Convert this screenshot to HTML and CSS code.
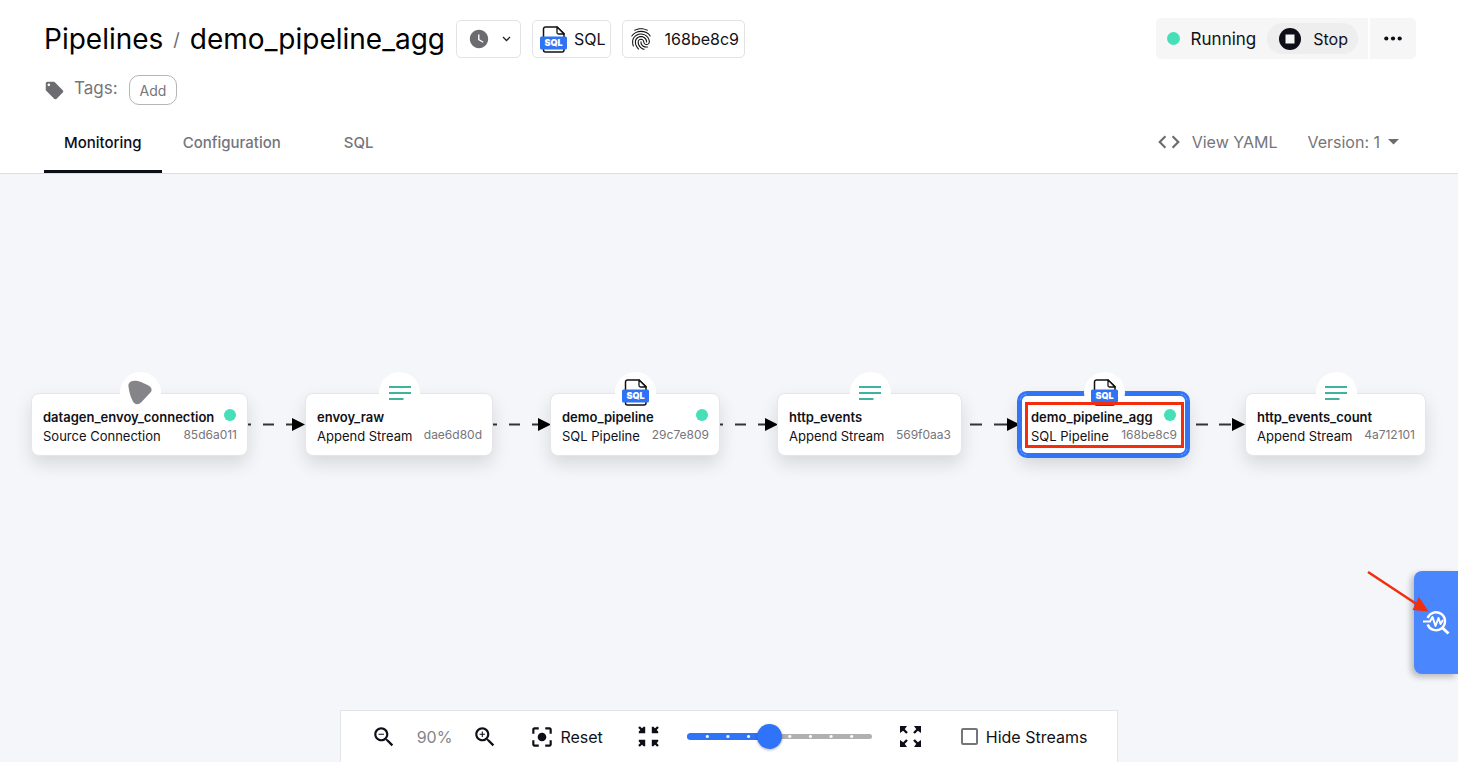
FILE: index.html
```html
<!DOCTYPE html>
<html lang="en">
<head>
    <meta charset="utf-8">
    <title>demo_pipeline_agg - Pipelines</title>
    <meta name="viewport" content="width=device-width, initial-scale=1">
    <link rel="stylesheet" href="styles.css">
</head>
<body>
    <!-- shared icons -->
    <svg class="sprite" aria-hidden="true">
        <symbol id="icon-sql" viewBox="0 0 27 27">
            <path d="M5.5 1H17l7 6.5V24a2 2 0 0 1-2 2H5.5a2 2 0 0 1-2-2V3a2 2 0 0 1 2-2z" fill="#fff" stroke="#111" stroke-width="1.5"/>
            <path d="M17 1v5.500a1.500 1.500 0 0 0 1.500 1.500H24z" fill="#fff" stroke="#111" stroke-width="1.3" stroke-linejoin="round"/>
            <rect x="0" y="10.500" width="27" height="13" rx="1.5" fill="#2f73f5"/>
            <text x="13.500" y="20.300" text-anchor="middle" class="sql-label">SQL</text>
        </symbol>
        <symbol id="icon-stream" viewBox="0 0 22 14">
            <path d="M0 1h22M0 7h22M0 13h14.500" stroke="#3fb39b" stroke-width="2"/>
        </symbol>
    </svg>

    <header class="header">
        <div class="title-row">
            <h1 class="title">
                <a href="#">Pipelines</a>
                <span class="slash">/</span>
                <span>demo_pipeline_agg</span>
            </h1>
            <button class="chip chip-schedule" aria-label="Schedule">
                <svg width="22" height="22" viewBox="0 0 24 24" fill="#6b6b70"><path d="M12 2C6.5 2 2 6.5 2 12s4.5 10 10 10 10-4.5 10-10S17.5 2 12 2zm4.200 14.200L11 13V7h1.500v5.200l4.500 2.700-.8 1.300z"/></svg>
                <svg width="9" height="6" viewBox="0 0 9 6" fill="none" stroke="#222" stroke-width="1.3"><path d="M1 1l3.500 3.500L8 1"/></svg>
            </button>
            <div class="chip chip-sql">
                <svg width="27" height="27"><use href="#icon-sql"/></svg>
                <span>SQL</span>
            </div>
            <div class="chip chip-id">
                <svg width="26" height="26" viewBox="0 0 24 24" fill="#111"><path d="M17.810 4.470c-.08 0-.16-.02-.23-.06C15.660 3.420 14 3 12.010 3c-1.980 0-3.860.47-5.570 1.410-.24.13-.54.04-.68-.2-.13-.24-.04-.55.2-.68C7.820 2.520 9.860 2 12.010 2c2.130 0 3.990.47 6.030 1.520.25.13.34.43.21.67-.09.18-.26.28-.44.28zM3.500 9.720c-.1 0-.2-.03-.29-.09-.23-.16-.28-.47-.12-.7.99-1.400 2.250-2.500 3.750-3.270C9.980 4.040 14 4.030 17.150 5.650c1.500.77 2.760 1.860 3.750 3.250.16.22.11.54-.12.7-.23.16-.54.11-.7-.12-.9-1.260-2.040-2.250-3.390-2.940-2.870-1.470-6.540-1.470-9.400.01-1.360.7-2.500 1.700-3.400 2.960-.08.14-.23.21-.39.21zm6.250 12.070c-.13 0-.26-.05-.35-.15-.87-.87-1.340-1.430-2.010-2.640-.69-1.230-1.050-2.730-1.050-4.340 0-2.970 2.540-5.390 5.660-5.390s5.660 2.420 5.660 5.390c0 .28-.22.5-.5.5s-.5-.22-.5-.5c0-2.420-2.090-4.390-4.660-4.390-2.570 0-4.660 1.970-4.660 4.390 0 1.440.32 2.770.93 3.850.64 1.150 1.080 1.640 1.850 2.420.19.2.19.51 0 .71-.11.1-.24.15-.37.15zm7.170-1.850c-1.190 0-2.240-.3-3.100-.89-1.490-1.010-2.380-2.650-2.380-4.390 0-.28.22-.5.5-.5s.5.22.5.5c0 1.410.72 2.740 1.940 3.560.71.48 1.540.71 2.540.71.24 0 .64-.03 1.040-.1.27-.05.53.13.58.41.05.27-.13.53-.41.58-.57.11-1.070.12-1.210.12zM14.910 22c-.04 0-.09-.01-.13-.02-1.590-.44-2.630-1.030-3.720-2.100-1.400-1.390-2.170-3.240-2.170-5.220 0-1.620 1.380-2.940 3.080-2.940 1.700 0 3.080 1.320 3.080 2.940 0 1.070.93 1.940 2.080 1.940s2.080-.87 2.080-1.940c0-3.770-3.250-6.830-7.250-6.830-2.840 0-5.440 1.580-6.610 4.030-.39.81-.59 1.760-.59 2.800 0 .78.07 2.010.67 3.610.1.26-.03.55-.29.64-.26.1-.55-.04-.64-.29-.49-1.310-.73-2.610-.73-3.960 0-1.200.23-2.290.68-3.240 1.330-2.790 4.280-4.600 7.510-4.600 4.550 0 8.250 3.510 8.250 7.830 0 1.620-1.380 2.940-3.080 2.940s-3.080-1.320-3.080-2.940c0-1.070-.93-1.940-2.080-1.940s-2.080.87-2.080 1.940c0 1.710.66 3.310 1.870 4.510.95.94 1.860 1.460 3.270 1.850.27.07.42.35.35.61-.05.23-.26.38-.47.38z"/></svg>
                <span>168be8c9</span>
            </div>
            <div class="actions">
                <div class="status">
                    <span class="dot"></span>
                    <span class="status-text">Running</span>
                    <button class="stop">
                        <svg width="22" height="22" viewBox="0 0 22 22"><circle cx="11" cy="11" r="11" fill="#0e0e18"/><rect x="6.500" y="6.500" width="9" height="9" fill="#f4f4f4"/></svg>
                        Stop
                    </button>
                </div>
                <button class="more" aria-label="More">
                    <svg width="18" height="5" viewBox="0 0 18 5" fill="#0e0e18"><circle cx="2.300" cy="2.500" r="2.100"/><circle cx="9" cy="2.500" r="2.100"/><circle cx="15.700" cy="2.500" r="2.100"/></svg>
                </button>
            </div>
        </div>

        <div class="tags">
            <svg width="21" height="21" viewBox="0 0 24 24" fill="#6b6b70"><path d="M21.410 11.580l-9-9C12.050 2.220 11.550 2 11 2H4c-1.100 0-2 .9-2 2v7c0 .55.22 1.050.59 1.420l9 9c.36.36.86.58 1.410.58.55 0 1.050-.22 1.410-.59l7-7c.37-.36.59-.86.59-1.410 0-.55-.23-1.060-.59-1.420zM5.500 7C4.670 7 4 6.330 4 5.500S4.670 4 5.500 4 7 4.670 7 5.500 6.330 7 5.500 7z"/></svg>
            <span class="tags-label">Tags:</span>
            <button class="add">Add</button>
        </div>

        <nav class="tabs">
            <a class="tab active" href="#">Monitoring</a>
            <a class="tab" href="#">Configuration</a>
            <a class="tab tab-sql" href="#">SQL</a>
            <div class="tabs-right">
                <button class="link-btn">
                    <svg width="26" height="26" viewBox="0 0 24 24" fill="#6b6b70"><path d="M9.400 16.600L4.800 12l4.600-4.600L8 6l-6 6 6 6 1.400-1.400zm5.200 0l4.600-4.600-4.600-4.600L16 6l6 6-6 6-1.400-1.400z"/></svg>
                    View YAML
                </button>
                <button class="link-btn version">
                    Version: 1
                    <svg width="11" height="6" viewBox="0 0 11 6" fill="#6b6b70"><path d="M0 0h11L5.500 5.500z"/></svg>
                </button>
            </div>
        </nav>
    </header>

    <main class="canvas">
        <div class="graph">
            <svg class="edges" width="1395" height="64" viewBox="0 0 1395 64">
                <g stroke="#333" stroke-width="2">
                    <path d="M217 31.500h3M232 31.500h11M255 31.500h8"/>
                    <path d="M462 31.500h4M478 31.500h11M501 31.500h8"/>
                    <path d="M689 31.500h3M704 31.500h11M727 31.500h8"/>
                    <path d="M939 31.500h12M963 31.500h13"/>
                    <path d="M1165 31.500h12M1188 31.500h12"/>
                </g>
                <path d="M261 25l13 6.500-13 6.500zM507 25l13 6.500-13 6.500zM734 25l13 6.500-13 6.500zM976 25l13 6.500-13 6.500zM1201 25l13 6.500-13 6.500z" fill="#000"/>
            </svg>

            <div class="node n1">
                <div class="badge"><svg width="24" height="25" viewBox="0 0 24 25"><path d="M3 1.500C5 .3 9 .4 13 2l6.500 3C24 7 25 10.500 21.500 13.500L13.500 22C10.500 25.200 7 25 5 21.500 2.500 17 1 11.500.6 7-.1 4.500 1 2.500 3 1.500z" fill="#858589"/></svg></div>
                <div class="node-row"><span class="node-name">datagen_envoy_connection</span><span class="dot"></span></div>
                <div class="node-row"><span class="node-type">Source Connection</span><span class="node-id">85d6a011</span></div>
            </div>
            <div class="node n2">
                <div class="badge"><svg width="22" height="14"><use href="#icon-stream"/></svg></div>
                <div class="node-row"><span class="node-name">envoy_raw</span></div>
                <div class="node-row"><span class="node-type">Append Stream</span><span class="node-id">dae6d80d</span></div>
            </div>
            <div class="node n3">
                <div class="badge"><svg width="27" height="27"><use href="#icon-sql"/></svg></div>
                <div class="node-row"><span class="node-name">demo_pipeline</span><span class="dot"></span></div>
                <div class="node-row"><span class="node-type">SQL Pipeline</span><span class="node-id">29c7e809</span></div>
            </div>
            <div class="node n4">
                <div class="badge"><svg width="22" height="14"><use href="#icon-stream"/></svg></div>
                <div class="node-row"><span class="node-name">http_events</span></div>
                <div class="node-row"><span class="node-type">Append Stream</span><span class="node-id">569f0aa3</span></div>
            </div>
            <div class="node n5 selected">
                <div class="badge"><svg width="27" height="27"><use href="#icon-sql"/></svg></div>
                <div class="node-row"><span class="node-name">demo_pipeline_agg</span><span class="dot"></span></div>
                <div class="node-row"><span class="node-type">SQL Pipeline</span><span class="node-id">168be8c9</span></div>
                <div class="highlight"></div>
            </div>
            <div class="node n6">
                <div class="badge"><svg width="22" height="14"><use href="#icon-stream"/></svg></div>
                <div class="node-row"><span class="node-name">http_events_count</span></div>
                <div class="node-row"><span class="node-type">Append Stream</span><span class="node-id">4a712101</span></div>
            </div>
        </div>

        <button class="inspect" aria-label="Inspect">
            <svg width="28" height="25" viewBox="0 0 28 25" fill="none" stroke="#fff">
                <path d="M4.600 8a9 9 0 1 1 0 6.500" stroke-width="2.400"/>
                <path d="M0 11.500h7l2.500-4.500 3 9 3-8 2 6 2.500-4" stroke-width="2" stroke-linejoin="round"/>
                <path d="M19 17.500l6.500 6" stroke-width="3"/>
            </svg>
        </button>
        <svg class="pointer" width="62" height="42" viewBox="0 0 62 42">
            <path d="M1 1l50 33" stroke="#f22e0c" stroke-width="2.500"/>
            <path d="M52 26l9.500 14.500L45.500 39z" fill="#f22e0c"/>
        </svg>
    </main>

    <footer class="toolbar">
        <button aria-label="Zoom out">
            <svg width="26" height="26" viewBox="0 0 24 24" fill="#0e0e18"><path d="M15.500 14h-.79l-.28-.27C15.410 12.590 16 11.110 16 9.500 16 5.910 13.090 3 9.500 3S3 5.910 3 9.500 5.910 16 9.500 16c1.610 0 3.090-.59 4.230-1.570l.27.28v.79l5 4.990L20.490 19l-4.990-5zm-6 0C7.010 14 5 11.990 5 9.500S7.010 5 9.500 5 14 7.010 14 9.500 11.990 14 9.500 14zM7 9h5v1H7z"/></svg>
        </button>
        <span class="zoom-level">90%</span>
        <button aria-label="Zoom in">
            <svg width="26" height="26" viewBox="0 0 24 24" fill="#0e0e18"><path d="M15.500 14h-.79l-.28-.27C15.410 12.590 16 11.110 16 9.500 16 5.910 13.090 3 9.500 3S3 5.910 3 9.500 5.910 16 9.500 16c1.610 0 3.090-.59 4.230-1.570l.27.28v.79l5 4.990L20.490 19l-4.990-5zm-6 0C7.010 14 5 11.990 5 9.500S7.010 5 9.500 5 14 7.010 14 9.500 11.990 14 9.500 14zM12 10h-2v2H9v-2H7V9h2V7h1v2h2v1z"/></svg>
        </button>
        <button class="reset">
            <svg width="26" height="26" viewBox="0 0 24 24" fill="#0e0e18"><path d="M12 8c-2.210 0-4 1.790-4 4s1.790 4 4 4 4-1.790 4-4-1.790-4-4-4zm-7 7H3v4c0 1.100.9 2 2 2h4v-2H5v-4zM5 5h4V3H5c-1.100 0-2 .9-2 2v4h2V5zm14-2h-4v2h4v4h2V5c0-1.100-.9-2-2-2zm0 16h-4v2h4c1.100 0 2-.9 2-2v-4h-2v4z"/></svg>
            Reset
        </button>
        <button aria-label="Compact">
            <svg width="21" height="21" viewBox="0 0 21 21" fill="#0e0e18">
                <path d="M1 1l5 5M20 1l-5 5M1 20l5-5M20 20l-5-5" stroke="#0e0e18" stroke-width="2.400"/>
                <path d="M7.200.800v6.400H.800V5.600l4.800-4.800zM13.800.800v6.400h6.400V5.600l-4.800-4.800zM7.200 20.200v-6.400H.800v1.600l4.800 4.800zM13.800 20.200v-6.400h6.400v1.600l-4.800 4.800z"/>
            </svg>
        </button>
        <div class="slider">
            <span class="slider-fill"></span>
            <input type="range" min="0" max="9" value="4" aria-label="Spacing">
        </div>
        <button aria-label="Expand">
            <svg width="21" height="21" viewBox="0 0 21 21" fill="#0e0e18">
                <path d="M2 2l5 5M19 2l-5 5M2 19l5-5M19 19l-5-5" stroke="#0e0e18" stroke-width="2.400"/>
                <path d="M0 0h7L5.200 2.400 2.400 5.200 0 7zM21 0h-7l1.800 2.400 2.800 2.800L21 7zM0 21h7l-1.800-2.400-2.800-2.800L0 14zM21 21h-7l1.800-2.400 2.800-2.800L21 14z"/>
            </svg>
        </button>
        <label class="hide-streams">
            <input type="checkbox">
            Hide Streams
        </label>
    </footer>
</body>
</html>
```
FILE: styles.css
```css
* {
    box-sizing: border-box;
}
body {
    margin: 0;
    min-height: 100vh;
    display: flex;
    flex-direction: column;
    font-family: Inter, "Liberation Sans", sans-serif;
    font-size: 16px;
    color: #111118;
    background: #f5f6fa;
    overflow: hidden;
}
button {
    font: inherit;
    color: inherit;
    border: none;
    background: none;
    padding: 0;
    display: flex;
    align-items: center;
    cursor: pointer;
}
a {
    color: inherit;
    text-decoration: none;
}
svg {
    display: block;
    flex: none;
}
.sprite {
    display: none;
}
.sql-label {
    font-family: Inter, sans-serif;
    font-size: 9px;
    font-weight: 900;
    fill: #fff;
}
.dot {
    flex: none;
    width: 12px;
    height: 12px;
    border-radius: 50%;
    background: #45e0b8;
}

/* header */
.header {
    background: #fff;
    padding: 18px 42px 0 44px;
    border-bottom: 1px solid #dcdde4;
}
.title-row {
    display: flex;
    align-items: center;
    height: 42px;
}
.title {
    display: flex;
    align-items: center;
    gap: 10px;
    margin: 0 11px 0 0;
    font-size: 28px;
    font-weight: 400;
    color: #000;
}
.slash {
    font-size: 18px;
    color: #6b6b70;
}
.chip {
    display: flex;
    align-items: center;
    height: 38px;
    border: 1px solid #e3e3e6;
    border-radius: 5px;
    margin-right: 11px;
}
.chip-schedule {
    gap: 12px;
    padding: 0 9px 0 11px;
}
.chip-sql {
    gap: 7px;
    padding: 0 4px 0 7px;
}
.chip-id {
    gap: 11px;
    padding: 0 5px 0 5px;
}
.actions {
    display: flex;
    align-self: flex-start;
    gap: 2px;
    margin-left: auto;
    height: 41px;
}
.status {
    display: flex;
    align-items: center;
    padding: 0 10px 0 11px;
    background: #f6f6f6;
    border-radius: 5px 0 0 5px;
}
.status .dot {
    width: 13px;
    height: 13px;
}
.status-text {
    margin: 0 11px 0 11px;
    font-size: 17px;
}
.stop {
    height: 31px;
    gap: 12px;
    padding: 0 10px 0 12px;
    border-radius: 16px;
    background: #eee;
}
.more {
    width: 46px;
    justify-content: center;
    background: #f6f6f6;
    border-radius: 0 5px 5px 0;
}
.tags {
    display: flex;
    align-items: center;
    margin-top: 15px;
    height: 30px;
    color: #75757a;
}
.tags-label {
    margin: 0 11px 4px 9px;
    font-size: 17px;
}
.add {
    height: 30px;
    padding: 0 10px;
    font-size: 14px;
    border: 1px solid #b5b5b8;
    border-radius: 10px;
}
.tabs {
    display: flex;
    gap: 1px;
    margin-top: 7px;
    height: 61px;
    font-size: 15px;
    font-weight: 500;
    color: #75757a;
}
.tab {
    display: flex;
    align-items: center;
    padding: 2px 20px 0;
    border-bottom: 3px solid transparent;
}
.tab.active {
    color: #0e0e18;
    border-bottom-color: #0e0e18;
}
.tab-sql {
    padding: 2px 42px 0;
}
.tabs-right {
    display: flex;
    gap: 30px;
    margin-left: auto;
    padding: 0 17px 1px 0;
    font-size: 16px;
    font-weight: 400;
}
.link-btn {
    gap: 10px;
}
.version {
    gap: 8px;
}

/* pipeline graph */
.canvas {
    flex: 1;
    position: relative;
    font-size: 13px;
}
.graph {
    position: relative;
    width: 1396px;
    height: 64px;
    margin: 219px auto 0;
}
.edges {
    position: absolute;
    top: 0;
    left: 0;
}
.node {
    position: absolute;
    top: 0;
    height: 63px;
    padding: 13px 10px 0 11px;
    background: #fff;
    border: 1px solid #e6e6e8;
    border-radius: 8px;
    box-shadow: 0 8px 18px rgba(0, 0, 0, 0.12);
}
.n1 { left: 0; width: 217px; }
.n2 { left: 274px; width: 188px; }
.n3 { left: 519px; width: 170px; }
.n4 { left: 746px; width: 185px; }
.n5 { left: 988px; width: 169px; }
.n6 { left: 1214px; width: 181px; }
.node.selected {
    border-color: #3174f5;
    box-shadow: 0 0 0 2px #3174f5, inset 0 0 0 2px #3174f5, 0 8px 18px rgba(0, 0, 0, 0.14);
}
.badge {
    position: absolute;
    top: -22px;
    left: 50%;
    width: 41px;
    height: 41px;
    margin-left: -20px;
    display: flex;
    align-items: center;
    justify-content: center;
    border-radius: 50%;
    background: #fff;
}
.node-row {
    position: relative;
    display: flex;
    align-items: center;
    justify-content: space-between;
    height: 19px;
    white-space: nowrap;
}
.node-name {
    font-weight: 600;
}
.node-id {
    margin-bottom: 3px;
    font-size: 12px;
    color: #75757a;
}
.node .dot {
    margin: 0 1px 4px 0;
}
.highlight {
    position: absolute;
    top: 8px;
    left: 5px;
    right: 3px;
    bottom: 7px;
    border: 3px solid #f22e0c;
}

/* side drawer handle */
.inspect {
    position: absolute;
    top: 397px;
    right: 0;
    width: 44px;
    height: 103px;
    padding-left: 9px;
    background: #4a86fe;
    border-radius: 8px 0 0 8px;
    box-shadow: -3px 3px 6px rgba(0, 0, 0, 0.25);
}
.pointer {
    position: absolute;
    top: 397px;
    right: 29px;
}

/* bottom toolbar */
.toolbar {
    align-self: center;
    display: flex;
    align-items: center;
    height: 52px;
    padding: 0 30px;
    background: #fff;
    border: 1px solid #e3e4ea;
    border-bottom: none;
}
.zoom-level {
    margin: 0 20px;
    color: #85858a;
}
.reset {
    gap: 5px;
    margin: 0 35px 0 31px;
}
.slider {
    position: relative;
    width: 185px;
    height: 25px;
    margin: 0 28px;
}
.slider::before {
    content: "";
    position: absolute;
    top: 10px;
    left: 0;
    right: 0;
    height: 5px;
    border-radius: 3px;
    background: #b0b0b0;
}
.slider-fill {
    position: absolute;
    top: 9px;
    left: 0;
    width: 45%;
    height: 7px;
    border-radius: 4px;
    background: #2f73f8;
}
/* tick marks, one per step */
.slider::after {
    content: "";
    position: absolute;
    top: 10px;
    left: 10px;
    right: 10px;
    height: 5px;
    background: radial-gradient(circle, #fff 1px, transparent 2px) 0 0 / 12.5% 100%;
}
.slider input {
    position: absolute;
    z-index: 1;
    top: 0;
    left: -12px;
    width: 209px;
    height: 25px;
    margin: 0;
    appearance: none;
    background: none;
}
.slider input::-webkit-slider-thumb {
    appearance: none;
    width: 25px;
    height: 25px;
    border-radius: 50%;
    background: #2f73f8;
    box-shadow: 0 1px 3px rgba(0, 0, 0, 0.3);
}
.hide-streams {
    display: flex;
    align-items: center;
    gap: 8px;
    margin-left: 40px;
}
.hide-streams input {
    appearance: none;
    width: 17px;
    height: 17px;
    margin: 0;
    border: 2px solid #75757a;
    border-radius: 2px;
}
```
